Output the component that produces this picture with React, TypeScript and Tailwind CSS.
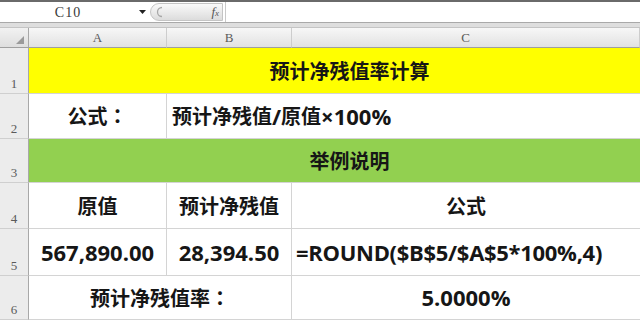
import React from "react";

const cjk = "font-['Noto_Sans_CJK_SC','Noto_Sans',sans-serif] text-[20px] font-bold";
const cjkTC = "font-['Noto_Sans_CJK_TC','Noto_Sans',sans-serif] text-[20px] font-bold";
const lat = "font-['Open_Sans','Noto_Sans_CJK_SC',sans-serif] text-[22px] font-bold";
const hdrFont = "font-['Liberation_Serif','DejaVu_Serif',serif] text-[13px] text-[#5a5a5a]";

function RowHead({ n }: { n: number }) {
  return (
    <div className="bg-[#ececec] border-r border-r-[#a8a8a8] border-b border-b-[#cfcfcf] flex items-end justify-center pb-0">
      <span className={hdrFont}>{n}</span>
    </div>
  );
}

export default function App() {
  return (
    <div className="w-[640px] h-[320px] overflow-hidden bg-white text-[#161616] flex flex-col">
      {/* formula bar */}
      <div className="h-[2px] bg-[#6a6a6a] shrink-0" />
      <div className="h-[21px] shrink-0 flex items-stretch bg-white border-b border-[#a9a9a9]">
        <div className="w-[134px] flex items-center justify-center pl-[2px]">
          <span className="font-['Liberation_Serif',serif] text-[14px] text-[#3a3a3a] tracking-[1px]">C10</span>
        </div>
        <div className="w-[16px] flex items-center justify-center">
          <svg width="7" height="4" viewBox="0 0 7 4"><path d="M0 0h7L3.5 4z" fill="#222" /></svg>
        </div>
        <div className="w-[73px] my-[1px] rounded-l-full bg-gradient-to-b from-[#fafafa] to-[#dcdcdc] border border-[#c4c4c4] flex items-center justify-between pl-[5px] pr-[3px]">
          <svg width="9" height="12" viewBox="0 0 9 12"><path d="M6 1.5a4.5 4.5 0 0 0 0 9" stroke="#a8a8a8" strokeWidth="1.3" fill="none" /></svg>
          <span className="font-['Liberation_Serif',serif] italic text-[13px] text-[#555]">f<span className="text-[9px]">x</span></span>
        </div>
        <div className="w-[3px] border-r border-[#c9c9c9]" />
        <div className="flex-1 bg-white" />
      </div>
      <div className="h-[5px] shrink-0 bg-[#dedede] border-b border-[#c4c4c4]" />

      {/* grid */}
      <div
        className="grid flex-1"
        style={{
          gridTemplateColumns: "29px 138px 125px 1fr",
          gridTemplateRows: "20px 46px 45px 44px 46px 47px 1fr",
        }}
      >
        {/* column headers */}
        <div className="bg-gradient-to-b from-[#f2f2f2] to-[#dedede] border-r border-[#a8a8a8] border-b border-b-[#9f9f9f] flex items-end justify-end pr-[4px] pb-[3px]">
          <svg width="8" height="8" viewBox="0 0 8 8"><path d="M8 0v8H0z" fill="#9a9a9a" /></svg>
        </div>
        {["A", "B", "C"].map((c) => (
          <div
            key={c}
            className="bg-gradient-to-b from-[#f7f7f7] to-[#e2e2e2] border-r border-r-[#cdcdcd] border-b border-b-[#9f9f9f] flex items-center justify-center"
          >
            <span className={hdrFont}>{c}</span>
          </div>
        ))}

        {/* row 1 */}
        <RowHead n={1} />
        <div className="col-span-3 bg-[#ffff00] border-b border-[#d4d4d4] flex items-center justify-center pl-[30px]">
          <span className={cjk}>预计净残值率计算</span>
        </div>

        {/* row 2 */}
        <RowHead n={2} />
        <div className="border-r border-b border-[#d4d4d4] flex items-center justify-center">
          <span className={cjk}>公式</span>
          <span className={cjkTC}>：</span>
        </div>
        <div className="col-span-2 border-b border-[#d4d4d4] flex items-center pl-[5px] whitespace-nowrap">
          <span className={cjk}>预计净残值</span>
          <span className={lat}>/</span>
          <span className={cjk}>原值</span>
          <span className={lat}>×100%</span>
        </div>

        {/* row 3 */}
        <RowHead n={3} />
        <div className="col-span-3 bg-[#92d050] border-b border-[#d4d4d4] flex items-center justify-center pl-[30px]">
          <span className={cjk}>举例说明</span>
        </div>

        {/* row 4 */}
        <RowHead n={4} />
        <div className="border-r border-b border-[#d4d4d4] flex items-center justify-center">
          <span className={cjk}>原值</span>
        </div>
        <div className="border-r border-b border-[#d4d4d4] flex items-center justify-center">
          <span className={cjk}>预计净残值</span>
        </div>
        <div className="border-b border-[#d4d4d4] flex items-center justify-center">
          <span className={cjk}>公式</span>
        </div>

        {/* row 5 */}
        <RowHead n={5} />
        <div className="border-r border-b border-[#d4d4d4] flex items-center justify-center">
          <span className={lat}>567,890.00</span>
        </div>
        <div className="border-r border-b border-[#d4d4d4] flex items-center justify-center">
          <span className={lat}>28,394.50</span>
        </div>
        <div className="border-b border-[#d4d4d4] flex items-center pl-[4px] whitespace-nowrap">
          <span className={`${lat} tracking-[-0.3px]`}>=ROUND($B$5/$A$5*100%,4)</span>
        </div>

        {/* row 6 */}
        <RowHead n={6} />
        <div className="col-span-2 border-r border-b border-[#d4d4d4] flex items-center justify-center">
          <span className={cjk}>预计净残值率</span>
          <span className={cjkTC}>：</span>
        </div>
        <div className="border-b border-[#d4d4d4] flex items-center justify-center">
          <span className={lat}>5.0000%</span>
        </div>
      </div>
    </div>
  );
}
